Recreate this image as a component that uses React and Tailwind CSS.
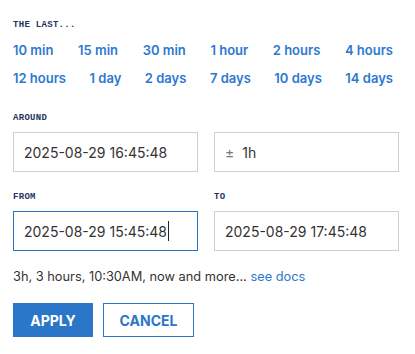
import { useState } from "react";

const rowOne = ["10 min", "15 min", "30 min", "1 hour", "2 hours", "4 hours"];
const rowTwo = ["12 hours", "1 day", "2 days", "7 days", "10 days", "14 days"];

function Label({ children }) {
  return (
    <div className="font-['Liberation_Mono',monospace] font-bold text-[9px] leading-[10px] tracking-[0.3px] text-[#1e3563] mb-[9px]">
      {children}
    </div>
  );
}

function Field({ value, active }) {
  return (
    <div
      className={
        active
          ? "h-[40px] border border-[#2a72c4] bg-white flex items-center px-[10px] text-[14px] text-[#333]"
          : "h-[40px] border border-[#ccd1d8] bg-white flex items-center px-[10px] text-[14px] text-[#333]"
      }
    >
      {value}
      {active && <span className="w-px h-[20px] bg-[#222] ml-[1px]"></span>}
    </div>
  );
}

export default function App() {
  const [around] = useState("2025-08-29 16:45:48");

  return (
    <div className="w-[415px] h-[354px] bg-white font-['Inter',sans-serif] px-[13px] pt-[20px]">

      {/* Quick ranges */}
      <Label>THE LAST...</Label>

      <div className="w-[380px] mt-[12px] flex justify-between text-[13px] font-semibold text-[#2e78cf] leading-[16px]">
        {rowOne.map((r) => (
          <span key={r}>{r}</span>
        ))}
      </div>

      <div className="w-[380px] mt-[12px] flex justify-between text-[13px] font-semibold text-[#2e78cf] leading-[16px]">
        {rowTwo.map((r) => (
          <span key={r}>{r}</span>
        ))}
      </div>

      {/* Around */}
      <div className="mt-[27px]">
        <Label>AROUND</Label>
        <div className="grid grid-cols-2 gap-[16px] w-[386px]">
          <Field value={around} />
          <div className="h-[40px] border border-[#ccd1d8] bg-white flex items-center px-[10px] text-[14px] text-[#333]">
            <span className="text-[#777] mr-[8px]">±</span>1h
          </div>
        </div>
      </div>

      {/* From / To */}
      <div className="mt-[20px] grid grid-cols-2 gap-[16px] w-[386px]">
        <div>
          <Label>FROM</Label>
          <Field value="2025-08-29 15:45:48" active />
        </div>
        <div>
          <Label>TO</Label>
          <Field value="2025-08-29 17:45:48" />
        </div>
      </div>

      <p className="mt-[18px] text-[12.8px] text-[#333] leading-[16px]">
        3h, 3 hours, 10:30AM, now and more...{" "}
        <span className="text-[#2e78cf]">see docs</span>
      </p>

      <div className="mt-[18px] flex gap-[10px]">
        <button className="w-[80px] h-[34px] bg-[#2a76c9] text-white font-bold text-[14px]">
          APPLY
        </button>
        <button className="w-[91px] h-[34px] border border-[#2a76c9] bg-white text-[#2a76c9] font-bold text-[14px]">
          CANCEL
        </button>
      </div>

    </div>
  );
}
